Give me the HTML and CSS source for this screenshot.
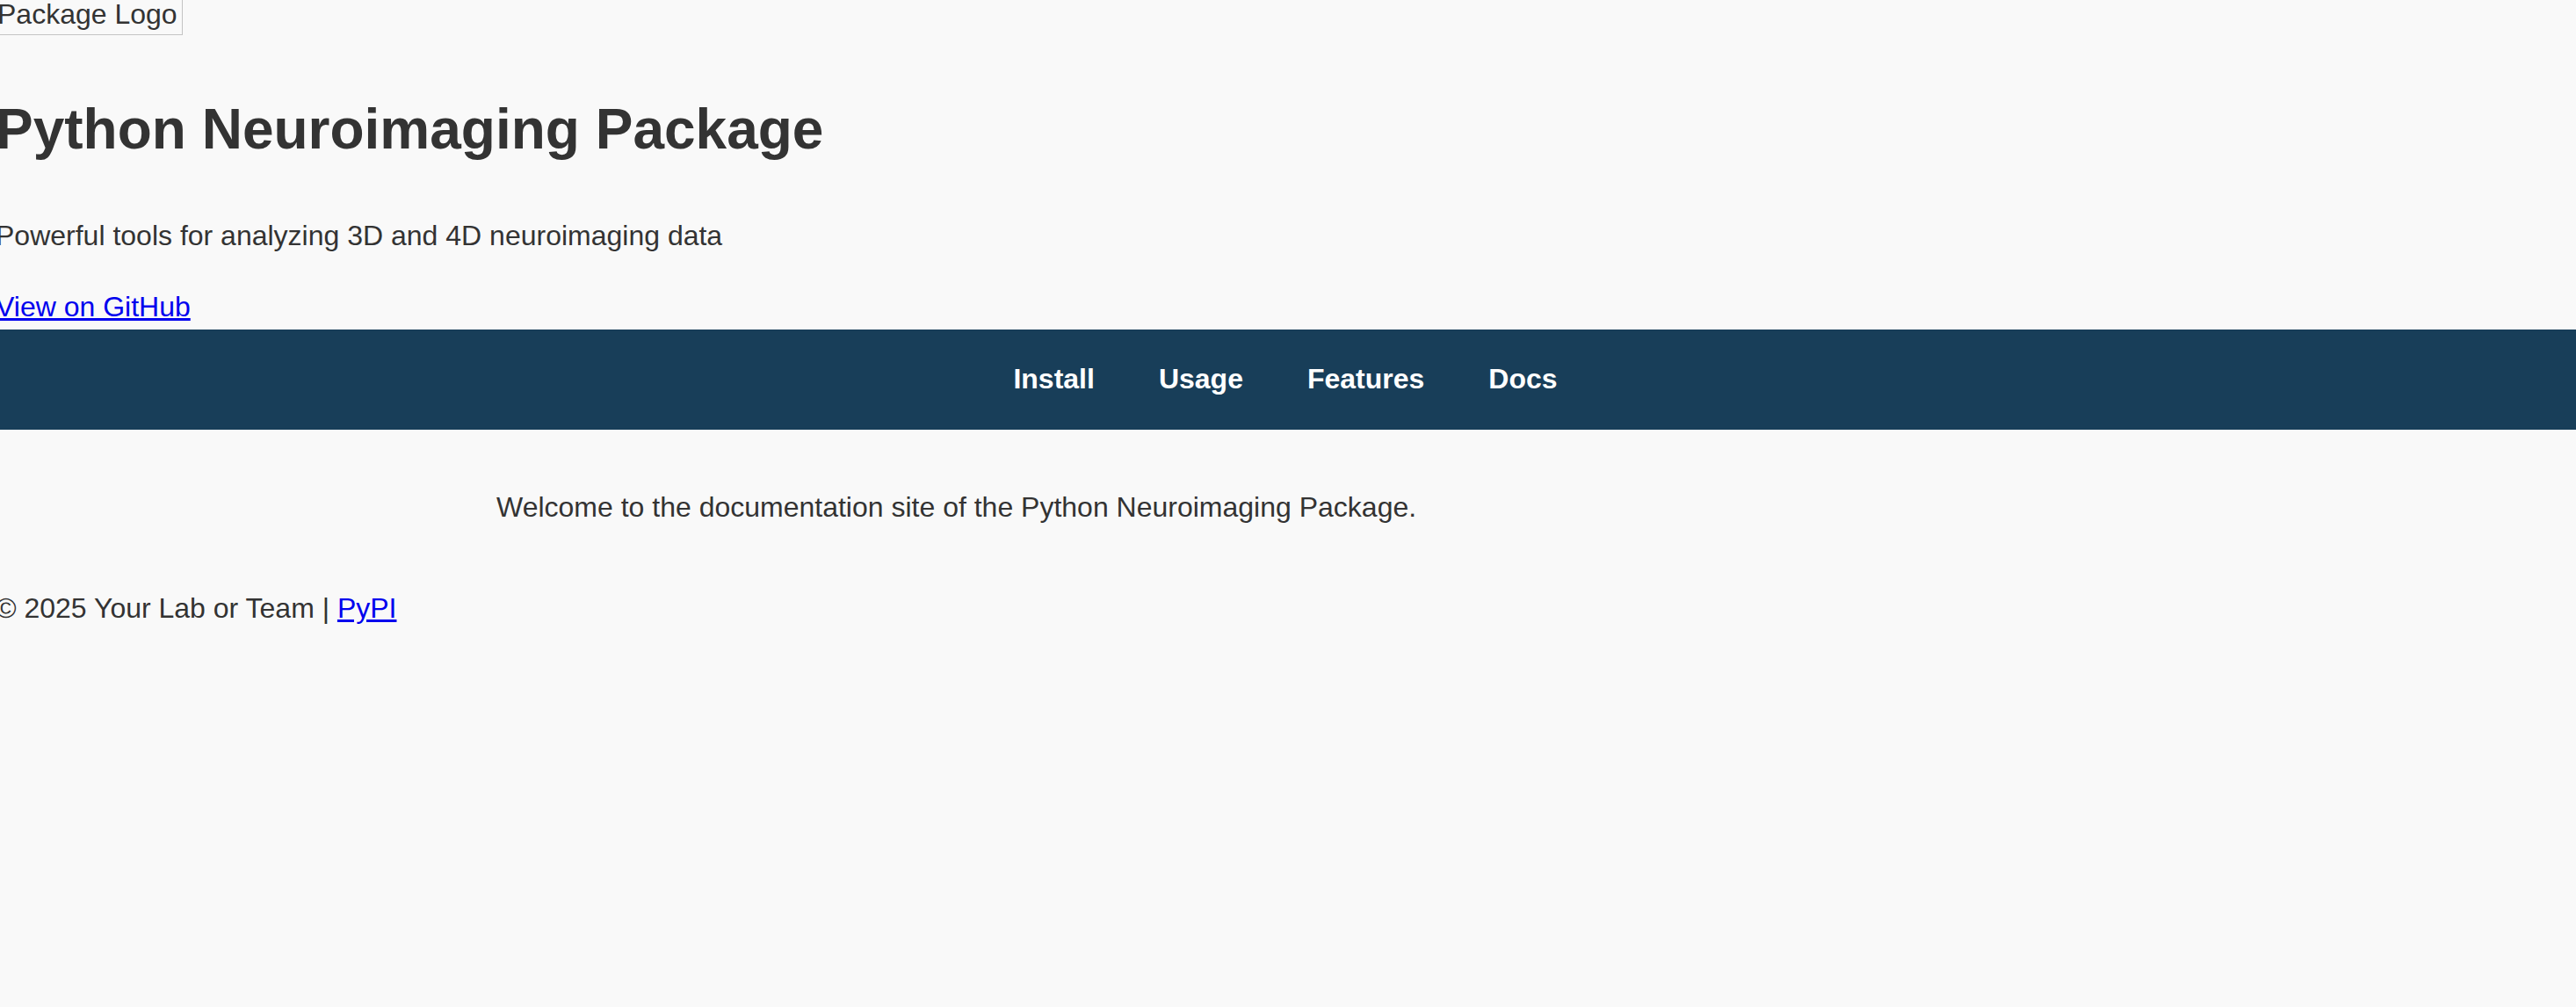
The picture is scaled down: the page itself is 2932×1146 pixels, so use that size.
FILE: index.html
```html
<!DOCTYPE html>
<html lang="en">
<head>
<meta charset="utf-8">
<title>Python Neuroimaging Package</title>
<link rel="stylesheet" href="styles.css">
</head>
<body>
<header class="site-header">
  <div class="logo">Package Logo</div>
  <h1 class="title">Python Neuroimaging Package</h1>
  <p class="tagline">Powerful tools for analyzing 3D and 4D neuroimaging data</p>
  <p class="repo"><a href="#">View on GitHub</a></p>
</header>
<nav class="main-nav">
  <a href="#install">Install</a>
  <a href="#usage">Usage</a>
  <a href="#features">Features</a>
  <a href="#docs">Docs</a>
</nav>
<main class="content">
  <p>Welcome to the documentation site of the Python Neuroimaging Package.</p>
</main>
<footer class="site-footer">
  <p>© 2025 Your Lab or Team | <a href="#">PyPI</a></p>
</footer>
</body>
</html>
```
FILE: styles.css
```css
html, body {
  margin: 0;
  padding: 0;
}
body {
  background: #f9f9f9;
  color: #333333;
  font-family: "Liberation Sans", Arial, sans-serif;
  font-size: 32px;
  line-height: normal;
  overflow: hidden;
}
a {
  color: #0000ee;
}
.site-header {
  margin-left: -5px;
}
.logo {
  width: fit-content;
  margin-top: -3px;
  margin-left: 2px;
  padding: 0 5px 4px 0;
  border: 1px solid #c4c4c4;
  border-left: none;
  color: #333333;
}
.title {
  margin: 70px 0 0 0;
  font-size: 64px;
  font-weight: bold;
  line-height: normal;
}
.tagline {
  margin: 66px 0 0 0;
}
.repo {
  margin: 44px 0 0 0;
}
.main-nav {
  margin-top: 7px;
  background: #183e59;
  padding: 38px 6px 39px 0;
  display: flex;
  justify-content: center;
  gap: 73px;
}
.main-nav a {
  color: #ffffff;
  font-weight: bold;
  text-decoration: none;
}
.content {
  width: 1802px;
  margin: 0 auto;
  padding-top: 70px;
}
.content p {
  margin: 0;
}
.site-footer {
  margin-left: -5px;
  padding-top: 78px;
}
.site-footer p {
  margin: 0;
}
```
